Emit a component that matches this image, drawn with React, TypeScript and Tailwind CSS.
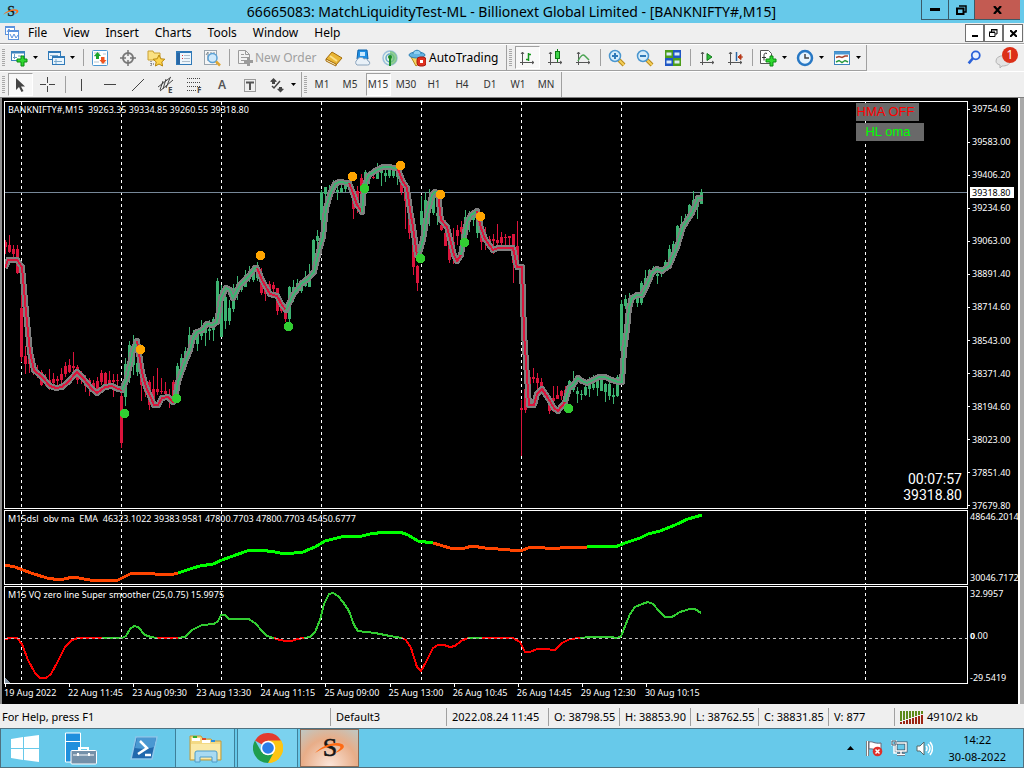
import React from "react";

type Candle = [x: number, high: number, low: number, top: number, bottom: number];
type Run = { color: string; points: string };

const RED = "#dc143c";
const GREEN = "#3cb371";

const redCandles: Candle[] = [
  [5, 240, 254, 242, 247], [9, 235, 253, 245, 252], [13, 245, 258, 249, 254], [17, 245, 274, 249, 273],
  [21, 262, 362, 308, 357], [25, 346, 374, 356, 364], [29, 350, 373, 358, 364], [33, 356, 375, 362, 372],
  [37, 365, 378, 370, 374], [41, 370, 386, 372, 385], [45, 374, 386, 377, 383], [49, 369, 390, 380, 386],
  [53, 373, 388, 379, 383], [57, 376, 387, 379, 381], [61, 368, 384, 374, 380], [65, 362, 377, 366, 374],
  [69, 359, 373, 365, 372], [73, 352, 371, 366, 368], [77, 365, 384, 367, 380], [81, 371, 384, 373, 380],
  [85, 375, 392, 378, 386], [89, 378, 396, 380, 389], [93, 380, 392, 383, 388], [97, 377, 387, 381, 391],
  [101, 370, 385, 373, 382], [105, 372, 384, 373, 385], [109, 371, 387, 380, 386], [113, 374, 397, 380, 382],
  [117, 374, 388, 380, 381], [121, 385, 448, 396, 443], [141, 370, 401, 375, 385], [145, 377, 397, 381, 392],
  [149, 380, 410, 382, 405], [153, 376, 406, 389, 404], [157, 368, 395, 389, 392], [161, 378, 394, 391, 392],
  [165, 382, 400, 391, 394], [169, 389, 408, 395, 398], [173, 380, 400, 382, 397], [261, 268, 295, 275, 293],
  [265, 280, 301, 290, 294], [269, 281, 290, 284, 289], [273, 282, 292, 285, 289], [277, 288, 315, 288, 311],
  [281, 302, 313, 305, 311], [285, 308, 322, 311, 319], [349, 182, 190, 184, 188], [353, 190, 219, 195, 209],
  [357, 186, 213, 191, 205], [361, 174, 212, 178, 200], [373, 176, 179, 177, 178], [401, 178, 195, 182, 192],
  [405, 183, 229, 190, 201], [409, 190, 239, 210, 233], [413, 225, 275, 230, 267], [417, 265, 291, 266, 283],
  [441, 215, 231, 225, 230], [445, 220, 246, 233, 246], [449, 229, 263, 243, 260], [453, 228, 264, 242, 258],
  [457, 225, 245, 230, 236], [461, 221, 240, 227, 232], [481, 227, 250, 232, 242], [485, 227, 250, 235, 242],
  [489, 236, 250, 239, 241], [493, 234, 254, 239, 241], [497, 224, 245, 240, 243], [501, 232, 250, 237, 243],
  [505, 234, 248, 237, 238], [509, 236, 250, 236, 238], [513, 234, 283, 234, 263], [517, 221, 270, 246, 266],
  [521, 400, 456, 408, 410], [525, 385, 413, 389, 410], [529, 375, 406, 377, 405], [533, 368, 383, 377, 379],
  [537, 373, 400, 378, 383], [541, 378, 392, 382, 387], [545, 390, 400, 392, 398], [549, 395, 414, 398, 411],
  [553, 386, 412, 398, 401], [557, 386, 399, 395, 399], [561, 390, 400, 391, 396], [565, 386, 400, 390, 395],
];

const greenCandles: Candle[] = [
  [125, 358, 406, 364, 397], [129, 341, 383, 345, 378], [133, 335, 375, 345, 365], [137, 345, 376, 363, 372],
  [177, 363, 395, 366, 393], [181, 354, 375, 358, 370], [185, 347, 365, 351, 360], [189, 327, 355, 335, 350],
  [193, 330, 345, 333, 341], [197, 330, 351, 332, 344], [201, 320, 340, 328, 336], [205, 325, 346, 328, 333],
  [209, 320, 340, 329, 331], [213, 317, 341, 319, 330], [217, 278, 322, 281, 322], [221, 285, 337, 290, 337],
  [225, 290, 329, 297, 321], [229, 300, 325, 308, 321], [233, 284, 312, 288, 309], [237, 276, 300, 284, 294],
  [241, 280, 292, 282, 290], [245, 270, 287, 275, 287], [249, 266, 282, 272, 279], [253, 266, 282, 270, 280],
  [257, 262, 281, 267, 278], [289, 286, 323, 287, 319], [293, 280, 302, 287, 297], [297, 279, 293, 283, 290],
  [301, 280, 293, 284, 291], [305, 271, 287, 277, 286], [309, 264, 287, 274, 287], [313, 239, 272, 240, 268],
  [317, 230, 256, 236, 241], [321, 190, 236, 192, 220], [325, 187, 200, 187, 194], [329, 185, 205, 190, 198],
  [333, 180, 190, 184, 189], [337, 185, 200, 190, 192], [341, 183, 193, 188, 192], [345, 184, 192, 186, 189],
  [365, 170, 192, 172, 188], [369, 172, 184, 174, 179], [377, 163, 178, 168, 179], [381, 168, 186, 168, 173],
  [385, 170, 182, 173, 176], [389, 168, 178, 170, 176], [393, 168, 178, 171, 176], [397, 169, 185, 171, 177],
  [421, 196, 240, 211, 225], [425, 192, 225, 200, 220], [429, 189, 226, 198, 212], [433, 191, 215, 196, 213],
  [437, 192, 225, 213, 216], [465, 210, 240, 217, 235], [469, 211, 232, 213, 220], [473, 210, 226, 214, 220],
  [477, 210, 238, 215, 233], [569, 380, 395, 381, 391], [573, 371, 392, 381, 390], [577, 387, 403, 391, 394],
  [581, 390, 400, 394, 395], [585, 385, 396, 387, 395], [589, 377, 397, 381, 389], [593, 375, 390, 384, 388],
  [597, 377, 396, 379, 388], [601, 377, 391, 380, 391], [605, 383, 402, 384, 392], [609, 380, 400, 384, 396],
  [613, 388, 404, 395, 397], [617, 375, 397, 377, 396], [621, 300, 352, 304, 351], [625, 295, 309, 299, 306],
  [629, 293, 306, 298, 303], [633, 294, 303, 296, 300], [637, 293, 307, 296, 303], [641, 281, 305, 283, 303],
  [645, 270, 290, 278, 285], [649, 269, 285, 270, 283], [653, 266, 276, 268, 273], [657, 267, 284, 274, 276],
  [661, 267, 277, 268, 274], [665, 260, 270, 262, 268], [669, 245, 268, 249, 265], [673, 241, 258, 244, 254],
  [677, 225, 247, 226, 245], [681, 216, 235, 224, 226], [685, 214, 226, 218, 222], [689, 204, 222, 205, 218],
  [693, 191, 215, 200, 208], [697, 196, 219, 199, 207], [701, 189, 204, 192, 204],
];

const trend: Run[] = [
  { color: RED, points: "5,268 8,260 17,260 22,267 26,312 30,352 34,370 42,377 50,386 56,388 62,387 68,382 77,372 83,378 92,389 97,393 105,387 112,386 118,389 122,390" },
  { color: GREEN, points: "122,390 127,378 133,350 137,341" },
  { color: RED, points: "137,341 142,372 146,387 151,398 154,405 158,405 162,398 168,397 173,402 175,399" },
  { color: GREEN, points: "175,399 178,382 185,362 190,350 193,338 197,332 202,330 207,324 213,325 217,322 221,298 226,288 230,290 233,298 240,285 248,277 255,268 257,268" },
  { color: RED, points: "257,268 262,280 270,294 277,296 282,305 286,310" },
  { color: GREEN, points: "286,310 293,295 302,283 308,279 314,272 320,247 323,237 326,208 331,192 335,184 339,182 349,183" },
  { color: RED, points: "349,183 353,193 357,205 362,212" },
  { color: GREEN, points: "362,212 364,188 368,176 375,171 383,167 390,167 398,169" },
  { color: RED, points: "398,169 402,180 407,188 410,210 413,227 417,255" },
  { color: GREEN, points: "417,255 419,253 423,240 427,215 432,195 435,192 438,193" },
  { color: RED, points: "438,193 441,220 447,227 451,243 454,255 457,261 461,255" },
  { color: GREEN, points: "461,255 464,237 467,222 471,215 477,211" },
  { color: RED, points: "477,211 481,228 485,239 493,250 498,248 513,248 517,267 522,267 524,333 527,377 529,405 534,405 537,394 542,389 548,398 554,408 558,411 565,402" },
  { color: GREEN, points: "565,402 569,388 573,385 578,378 582,381 587,383 593,380 599,377 605,377 612,380 618,382 622,382 624,350 627,330 629,308 632,298 637,295 642,295 647,285 652,273 657,269 662,271 669,266 677,247 683,227 692,213 698,198 703,198" },
];

const volume: Run[] = [
  { color: "#ff4500", points: "5,565 15,567 23,570 31,573 47,578 60,580 73,577 90,580 118,580 124,577 132,573 146,573 155,574 170,575 178,573" },
  { color: "#00ff00", points: "178,573 190,569 200,566 213,564 222,560 233,556 247,551 260,550 275,552 285,554 303,552 315,547 325,541 333,539 345,536 358,537 370,534 385,532 400,532 408,535 418,541 433,543" },
  { color: "#ff4500", points: "433,543 450,548 462,549 472,546 485,548 510,550 523,550 528,548 538,547 552,549 568,547 587,547" },
  { color: "#00ff00", points: "587,547 610,546 615,547 625,543 640,538 648,534 660,531 675,525 688,519 702,515" },
];

const quality: Run[] = [
  { color: "#ff0000", points: "5,639 10,638 17,638 22,644 28,660 35,673 40,678 46,678 51,674 58,661 65,647 72,640 78,638 102,638" },
  { color: "#32cd32", points: "102,638 122,638 126,636 130,629 134,626 138,627 145,635 151,637 157,638" },
  { color: "#ff0000", points: "157,638 178,638" },
  { color: "#32cd32", points: "178,638 185,637 192,630 202,625 214,624 218,621 221,615 225,615 229,619 249,619 256,624 262,631 267,636 274,638" },
  { color: "#ff0000", points: "274,638 280,640 286,641 292,641 297,639 304,638" },
  { color: "#32cd32", points: "304,638 310,637 315,632 320,620 324,604 329,594 333,593 338,596 343,602 349,611 354,625 358,631 375,633 390,636 402,638" },
  { color: "#ff0000", points: "402,638 406,640 411,648 417,667 421,671 426,662 433,648 438,645 444,645 450,647 455,646 461,641 468,638" },
  { color: "#32cd32", points: "468,638 482,638" },
  { color: "#ff0000", points: "482,638 513,638 520,642 525,652 530,652 537,649 545,649 555,650 562,643 570,639 580,638" },
  { color: "#32cd32", points: "580,638 590,637 610,637 618,638 621,636 626,624 630,614 635,607 642,604 648,602 653,604 659,611 665,617 672,617 680,612 690,609 695,609 701,613" },
];

const sells = [[140, 349], [260, 255], [352, 176], [400, 165], [440, 194], [480, 216]];
const buys = [[124, 413], [176, 398], [288, 326], [364, 188], [420, 258], [464, 242], [568, 408]];
const days = [21, 121, 221, 321, 421, 521, 621, 865];

const prices = ["39754.60", "39583.00", "39406.20", "39234.60", "39063.00", "38891.40", "38714.60", "38543.00", "38371.40", "38194.60", "38023.00", "37851.40", "37679.80"];
const times = ["19 Aug 2022", "22 Aug 11:45", "23 Aug 09:30", "23 Aug 13:30", "24 Aug 11:15", "25 Aug 09:00", "25 Aug 13:00", "26 Aug 10:45", "26 Aug 14:45", "29 Aug 12:30", "30 Aug 10:15"];

function Lines({ runs, width }: { runs: Run[]; width: number }) {
  return (
    <>
      {runs.map((r) => (
        <polyline key={r.points} points={r.points} fill="none" stroke={r.color} strokeWidth={width} strokeLinejoin="round" />
      ))}
    </>
  );
}

function DayLines({ from, to }: { from: number; to: number }) {
  return (
    <>
      {days.map((x) => (
        <line key={x} x1={x + 0.5} x2={x + 0.5} y1={from} y2={to} stroke="#fff" strokeDasharray="3 3" />
      ))}
    </>
  );
}

function Candles({ data, color }: { data: Candle[]; color: string }) {
  return (
    <g fill={color}>
      {data.map(([x, high, low, top, bottom]) => (
        <React.Fragment key={x}>
          <rect x={x} y={high} width={1} height={low - high} />
          <rect x={x - 1} y={top} width={3} height={bottom - top} />
        </React.Fragment>
      ))}
    </g>
  );
}

function Plot({ box, children }: { box: string; children: React.ReactNode }) {
  return (
    <svg className="absolute inset-0 h-full w-full" viewBox={box} preserveAspectRatio="none" shapeRendering="crispEdges" aria-hidden="true">
      {children}
    </svg>
  );
}

function PriceChart() {
  return (
    <Plot box="5 102 962 406">
      <DayLines from={102} to={508} />
      <rect x="5" y="192" width="962" height="1" fill="#778899" />
      <Candles data={redCandles} color={RED} />
      <Candles data={greenCandles} color={GREEN} />
      <polyline points={trend.map((r) => r.points).join(" ")} fill="none" stroke="#808080" strokeWidth="6" strokeLinejoin="round" />
      <Lines runs={trend} width={2} />
      {sells.map(([x, y]) => <circle key={x} cx={x + 0.5} cy={y + 0.5} r="4.6" fill="#ffa500" />)}
      {buys.map(([x, y]) => <circle key={x} cx={x + 0.5} cy={y + 0.5} r="4.6" fill="#32cd32" />)}
    </Plot>
  );
}

/* ---------- icons ---------- */

function Icon({ size = 18, children }: { size?: number; children: React.ReactNode }) {
  return <svg width={size} height={size} viewBox="0 0 18 18" fill="none" className="shrink-0" aria-hidden="true">{children}</svg>;
}

function Caret() {
  return <svg width="5" height="3" viewBox="0 0 5 3" className="shrink-0" aria-hidden="true"><path d="M0 0h5L2.500 3z" fill="#000" /></svg>;
}

const plus = <path d="M11 7h3v3h3v3h-3v4h-3v-4H7v-3h4z" fill="#2fd82f" stroke="#0b8a12" />;
const axes = <path d="M4.500 3v13M2 13.500h14M3 5l1.500-2L6 5M14 12l2 1.500-2 1.500" stroke="#555" />;

const NewChart = () => (<Icon><rect x="1.500" y="2.500" width="13" height="9" fill="#fff" stroke="#3c83bd" /><path d="M1 3.500h14" stroke="#3c83bd" strokeWidth="2" /><path d="M4.500 5v5M3 8.500h4M8 7h4" stroke="#6a9cc4" />{plus}</Icon>);
const Profiles = () => (<Icon><rect x="1.500" y="2.500" width="12" height="8" fill="#eaf5fd" stroke="#2f79b8" /><path d="M1 3h13" stroke="#2f79b8" strokeWidth="2" /><rect x="5.500" y="7.500" width="12" height="8" fill="#eaf5fd" stroke="#2f79b8" /><path d="M5 8h13" stroke="#2f79b8" strokeWidth="2" /><path d="M3 6.500h8M7 12.500h8M9 10v5" stroke="#7aa9cd" /></Icon>);
const Market = () => (<Icon><rect x="1.500" y="1.500" width="15" height="15" rx="1" fill="#fff" stroke="#4a97d2" /><path d="M3 4h6M3 7h3M10 14h5M3 13h5M12 5h3" stroke="#b7c5d0" /><path d="M6.500 3l3.500 4H8v3H5V7H3z" fill="#19a52a" /><path d="M12 15l-3.500-4H10V8h3.500v3h2z" fill="#f0541e" /></Icon>);
const Target = () => (<Icon><circle cx="9" cy="9" r="5" stroke="#777" strokeWidth="2" /><path d="M9 1v6M9 11v6M1 9h6M11 9h6" stroke="#777" strokeWidth="1.500" /></Icon>);
const Navigator = () => (<Icon><path d="M1 2h5l1 2h6v7H1z" fill="#fbe182" stroke="#c9a032" /><path d="M4 12v5M4 15h4" stroke="#555" strokeDasharray="1 1" /><path d="M12 6l1.800 3.800 4 .4-3 2.700.8 4.100-3.600-2-3.600 2 .8-4.100-3-2.700 4-.4z" fill="#fdd44d" stroke="#b8860b" /></Icon>);
const Terminal = () => (<Icon><rect x="1.500" y="2.500" width="15" height="13" fill="#eef6fc" stroke="#2f79b8" /><path d="M2 3h14" stroke="#2f79b8" strokeWidth="2" /><rect x="2" y="4" width="3" height="11" fill="#2967a5" /><path d="M7 6.500h1M7 9.500h1" stroke="#d33" /><path d="M9 6.500h6M9 9.500h6M7 12.500h8" stroke="#aebdca" /></Icon>);
const Tester = () => (<Icon><rect x="1.500" y="1.500" width="12" height="14" fill="#f6f6f6" stroke="#9aa5ae" /><path d="M3 6l2-3v9M8 3v5M11 3v4" stroke="#7b8790" /><circle cx="9.500" cy="9" r="4.500" fill="#cfe9fb" stroke="#5ba1d6" strokeWidth="1.500" /><path d="M13 12.500l4 4" stroke="#e0a632" strokeWidth="2.500" /></Icon>);
const Order = () => (<Icon><path d="M2.500 1.500h7l4 4v9h-11z" fill="#f3f3f3" stroke="#9b9b9b" /><path d="M9.500 1.500v4h4M5 5.500h3M5 8.500h6M5 11.500h4" stroke="#9b9b9b" /><path d="M11 8h3v3h3v3h-3v3h-3v-3H8v-3h3z" fill="#9b9b9b" /></Icon>);
const Book = () => (<Icon><path d="M1 10L7 3l10 6-6 7z" fill="#e9b635" stroke="#a46c0b" /><path d="M1 10v2l10 5v-2z" fill="#fff3c8" stroke="#a46c0b" /><path d="M5 7l7 5" stroke="#fbe08a" strokeWidth="2" /></Icon>);
const Cloud = () => (<Icon><path d="M5 1h9l1 9H4z" fill="#1f8fe3" stroke="#0d62ab" /><path d="M7 3h5v4H7z" fill="#c9e9ff" /><path d="M4 16a3 3 0 010-5 4 4 0 017-1 3 3 0 014 2 2 2 0 01-.5 4z" fill="#e9f1f8" stroke="#8aa4bd" /></Icon>);
const Signal = () => (<Icon><circle cx="9" cy="9" r="7" fill="#e6f2e8" stroke="#9cc0dd" strokeWidth="1.500" /><circle cx="9" cy="9" r="4" stroke="#69a7cc" strokeWidth="1.500" /><path d="M9 2a7 7 0 010 14z" fill="#6dc06e" opacity=".7" /><circle cx="9" cy="8" r="2" fill="#178a25" /><path d="M9 9v8" stroke="#178a25" strokeWidth="2" /></Icon>);
const Auto = () => (<Icon><path d="M3 8l5 9 6-5V7z" fill="#f7d661" stroke="#b28a1a" /><ellipse cx="9" cy="6" rx="8" ry="3" fill="#63b4e2" stroke="#2f81b5" /><path d="M5 5c0-5 8-5 8 0" fill="#8fd0f2" stroke="#2f81b5" /><rect x="9" y="8" width="9" height="9" rx="3" fill="#e0301e" stroke="#a61b10" /><rect x="12" y="11" width="3" height="3" fill="#fff" /></Icon>);
const Bars = () => (<Icon>{axes}<path d="M10.500 4v8M8 10.500h3M11 5.500h2" stroke="#16961e" strokeWidth="1.500" /></Icon>);
const CandleIcon = () => (<Icon>{axes}<path d="M11.500 0v13" stroke="#0a7a12" /><rect x="9.500" y="2.500" width="4" height="7" fill="#3fd44a" stroke="#0a7a12" /></Icon>);
const LineIcon = () => (<Icon>{axes}<path d="M4 12c3-6 5-7 7-5l4 4" stroke="#4aa352" strokeWidth="1.500" /></Icon>);
const Zoomer = ({ inward }: { inward?: boolean }) => (<Icon><path d="M11 11l5 5" stroke="#b88a1c" strokeWidth="4" /><path d="M11 11l5 5" stroke="#f5cf58" strokeWidth="2" /><circle cx="7" cy="7" r="5.500" fill="#d6edfb" stroke="#4a96cf" strokeWidth="1.500" /><path d={inward ? "M4 7h6M7 4v6" : "M4 7h6"} stroke="#2f79b8" strokeWidth="2" /></Icon>);
const Tile = () => (<Icon><rect x="1" y="1" width="8" height="8" fill="#4d9e1b" /><rect x="9" y="1" width="8" height="8" fill="#1f56c4" /><rect x="1" y="9" width="8" height="8" fill="#1f56c4" /><rect x="9" y="9" width="8" height="8" fill="#4d9e1b" /><path d="M2.500 5h5M10.500 5h5M2.500 13h5M10.500 13h5" stroke="#dcecf8" strokeWidth="3" /></Icon>);
const Scroll = () => (<Icon>{axes}<path d="M9 4.500l5 3.500-5 3.500z" fill="#2fbf3a" stroke="#117a19" /></Icon>);
const Shift = () => (<Icon>{axes}<path d="M10.500 3v9" stroke="#2967a5" strokeWidth="1.500" /><path d="M12 8l3-2.500v5zM14 8h3" fill="#d3401a" stroke="#b03010" /></Icon>);
const Indicators = () => (<Icon><path d="M1.500 1.500h8l3 3v10h-11z" fill="#fff" stroke="#555" /><path d="M8 4.500c-2-1-3 0-3 2v5M3 8.500h4" stroke="#333" />{plus}</Icon>);
const Clock = () => (<Icon><circle cx="9" cy="9" r="7" fill="#e8f4fd" stroke="#2878c4" strokeWidth="2.500" /><path d="M9 5v4h4" stroke="#444" strokeWidth="1.500" /></Icon>);
const Template = () => (<Icon><rect x="1.500" y="2.500" width="15" height="13" fill="#fff" stroke="#3c83bd" /><path d="M1 4h16" stroke="#4a97d2" strokeWidth="3" /><path d="M3 8.500l3-1 3 1 3-1.500h3" stroke="#a8432d" strokeWidth="1.500" /><path d="M3 13l3-1.500 3 2 3-2 3 1.500" stroke="#2c9a41" strokeWidth="1.500" /></Icon>);

const Cursor = () => (<Icon><path d="M5 2v12l3-3 2.500 5 2-1L10 10.500h4z" fill="#444" /></Icon>);
const Cross = () => (<Icon><path d="M8.500 1v6M8.500 10v6M1 8.500h6M10 8.500h6" stroke="#444" /></Icon>);
const VLine = () => (<Icon><path d="M8.500 3v12" stroke="#444" /></Icon>);
const HLine = () => (<Icon><path d="M3 8.500h12" stroke="#444" /></Icon>);
const Slope = () => (<Icon><path d="M3 15L15 3" stroke="#444" /></Icon>);
const Channel = () => (<Icon><path d="M1 11L14 1M3 15L16 4M3 14l3-9M6 13l3-10M9 12l4-10" stroke="#444" /><text x="11" y="17" fontSize="8" fontFamily="Noto Sans" fontWeight="700" fill="#444">E</text></Icon>);
const Fibo = () => (<Icon><path d="M2 2.500h14M2 6.500h14M2 10.500h14M2 14.500h9" stroke="#444" strokeDasharray="1 1" /><text x="12" y="17" fontSize="8" fontFamily="Noto Sans" fontWeight="700" fill="#444">F</text></Icon>);
const LabelT = () => (<Icon><rect x="3.500" y="3.500" width="11" height="12" stroke="#444" strokeDasharray="1 1" /><path d="M5 6.500h8M9 6v8" stroke="#555" strokeWidth="2" /></Icon>);
const Arrows = () => (<Icon><path d="M2 5.500L5.500 2 9 5.500 7 6v2H4V6z" fill="#444" /><path d="M9 13l2-.5V11h3v1.500l2 .5-3.500 3.500z" fill="#444" /><path d="M4 10l2 2 6-7" stroke="#444" strokeWidth="1.500" /></Icon>);

function Logo({ size }: { size: number }) {
  return (
    <svg width={size} height={size} viewBox="0 0 30 24" aria-hidden="true">
      <text x="15" y="20" textAnchor="middle" fontFamily="Liberation Serif" fontSize="26" fill="#151515" stroke="#151515" strokeWidth="0.6">S</text>
      <path d="M0 17C8 9 20 5 27 8c5 3-1 7-7 9 5-4 7-6 4-7C18 8 8 12 0 17z" fill="#ff6a13" />
    </svg>
  );
}

/* ---------- toolbars ---------- */

function Tool({ label, pressed, children }: { label: string; pressed?: boolean; children: React.ReactNode }) {
  return (
    <button type="button" aria-label={label} className="flex h-[25px] w-7 shrink-0 items-center justify-center">
      <span className={pressed ? "flex h-[23px] w-[25px] items-center justify-center border border-white border-t-[#a0a0a0] border-l-[#a0a0a0] bg-[#f8f8f8]" : "flex items-center justify-center"}>{children}</span>
    </button>
  );
}

function MenuTool({ label, children }: { label: string; children: React.ReactNode }) {
  return <button type="button" aria-label={label} className="flex h-[25px] w-[37px] shrink-0 items-center gap-[5px] pl-1">{children}<Caret /></button>;
}

const Sep = () => <div className="flex w-[6px] shrink-0 justify-center py-1"><div className="w-px bg-[#a0a0a0]" /></div>;
const Grip = () => <div className="my-[4px] mr-px ml-[2px] w-[3px] shrink-0 bg-[repeating-linear-gradient(#a8a8a8_0_1px,#efefef_1px_2px)]" />;

const frames = ["M1", "M5", "M15", "M30", "H1", "H4", "D1", "W1", "MN"];

function Toolbars() {
  return (
    <div className="bg-[#efefef]">
      <div className="flex h-[27px] border-t border-white">
        <div className="flex border-r border-b border-[#a0a0a0]">
          <Grip />
          <MenuTool label="New chart"><NewChart /></MenuTool>
          <MenuTool label="Profiles"><Profiles /></MenuTool>
          <Sep />
          <Tool label="Market Watch"><Market /></Tool>
          <Tool label="Data Window"><Target /></Tool>
          <Tool label="Navigator"><Navigator /></Tool>
          <Tool label="Terminal"><Terminal /></Tool>
          <Tool label="Strategy Tester"><Tester /></Tool>
          <Sep />
          <button type="button" className="flex h-[25px] w-[88px] items-center gap-px pl-1 text-[12px] whitespace-nowrap text-[#a0a0a0]"><Order />New Order</button>
          <Tool label="MetaEditor"><Book /></Tool>
          <Tool label="Cloud"><Cloud /></Tool>
          <Tool label="Signals"><Signal /></Tool>
          <button type="button" className="flex h-[25px] w-[102px] items-center gap-[3px] pl-1 text-[12px] whitespace-nowrap"><Auto />AutoTrading</button>
        </div>
        <div className="flex border-r border-b border-[#a0a0a0]">
          <Grip />
          <Tool label="Bar chart" pressed><Bars /></Tool>
          <Tool label="Candlesticks"><CandleIcon /></Tool>
          <Tool label="Line chart"><LineIcon /></Tool>
          <Sep />
          <Tool label="Zoom in"><Zoomer inward /></Tool>
          <Tool label="Zoom out"><Zoomer /></Tool>
          <Tool label="Tile windows"><Tile /></Tool>
          <Sep />
          <Tool label="Auto scroll"><Scroll /></Tool>
          <Tool label="Chart shift"><Shift /></Tool>
          <Sep />
          <MenuTool label="Indicators"><Indicators /></MenuTool>
          <MenuTool label="Periods"><Clock /></MenuTool>
          <MenuTool label="Templates"><Template /></MenuTool>
        </div>
        <div className="ml-auto flex items-center gap-3 pr-[6px]">
          <button type="button" aria-label="Search"><Icon size={16}><circle cx="11" cy="6" r="4.500" fill="#eaf3ff" stroke="#2b62d9" strokeWidth="2" /><path d="M8 9l-5 6" stroke="#2b62d9" strokeWidth="3" /></Icon></button>
          <button type="button" aria-label="1 notification" className="relative h-[22px] w-6">
            <svg width="24" height="22" viewBox="0 0 24 22" aria-hidden="true"><path d="M2 14c0-7 14-7 14 0 0 4-4 5-8 5l-2 2v-3c-3-1-4-2-4-4z" fill="#e3e3e3" stroke="#b5b5b5" /></svg>
            <span className="absolute top-0 right-0 flex h-4 w-4 items-center justify-center rounded-full bg-[#dc3018] text-[12px] leading-4 text-white">1</span>
          </button>
        </div>
      </div>
      <div className="flex h-[26px] border-t border-white">
        <div className="flex border-r border-[#a0a0a0]">
          <Grip />
          <Tool label="Cursor" pressed><Cursor /></Tool>
          <Tool label="Crosshair"><Cross /></Tool>
          <Sep />
          <Tool label="Vertical line"><VLine /></Tool>
          <Tool label="Horizontal line"><HLine /></Tool>
          <Tool label="Trendline"><Slope /></Tool>
          <Tool label="Equidistant channel"><Channel /></Tool>
          <Tool label="Fibonacci retracement"><Fibo /></Tool>
          <Tool label="Text"><span className="text-[12px] font-semibold text-[#555]">A</span></Tool>
          <Tool label="Text label"><LabelT /></Tool>
          <MenuTool label="Arrows"><Arrows /></MenuTool>
        </div>
        <div className="flex border-r border-[#a0a0a0] pr-px">
          <Grip />
          {frames.map((f) => (
            <Tool key={f} label={f} pressed={f === "M15"}><span className="text-[10px] text-[#333]">{f}</span></Tool>
          ))}
        </div>
      </div>
    </div>
  );
}

const stats = [
  { text: "Default3", width: "w-[116px]" },
  { text: "2022.08.24 11:45", width: "w-[102px]" },
  { text: "O: 38798.55", width: "w-[71px]" },
  { text: "H: 38853.90", width: "w-[71px]" },
  { text: "L: 38762.55", width: "w-[68px]" },
  { text: "C: 38831.85", width: "w-[70px]" },
  { text: "V: 877", width: "w-[66px]" },
];

function Tick() {
  return <span className="h-px w-[2px] shrink-0 bg-white" />;
}

export default function App() {
  return (
    <div className="flex min-h-screen flex-col bg-[#efefef] font-['Noto_Sans',sans-serif] text-[12px] text-black">
      <header className="flex h-[23px] items-center bg-[#67c9ea] pl-[3px]">
        <Logo size={16} />
        <h1 className="flex-1 pl-[83px] text-center text-[14px] leading-[23px] whitespace-nowrap">66665083: MatchLiquidityTest-ML - Billionext Global Limited - [BANKNIFTY#,M15]</h1>
        <div className="mr-1 flex h-5 self-start border-b border-l border-[#3a5a68]">
          <button type="button" aria-label="Minimize" className="flex w-[27px] items-center justify-center border-r border-[#3a5a68]"><svg width="10" height="3" aria-hidden="true"><rect width="10" height="3" /></svg></button>
          <button type="button" aria-label="Restore" className="flex w-[26px] items-center justify-center border-r border-[#3a5a68]"><svg width="11" height="10" viewBox="0 0 11 10" fill="none" stroke="#000" aria-hidden="true"><path d="M3 1h7v6H8" strokeWidth="1.500" /><path d="M1 3.500h6.500v5.500H1z" strokeWidth="2" /></svg></button>
          <button type="button" aria-label="Close" className="flex w-[45px] items-center justify-center bg-[#c35b52]"><svg width="9" height="8" viewBox="0 0 9 8" aria-hidden="true"><path d="M1 0l7 8M8 0L1 8" stroke="#000" strokeWidth="2.200" /></svg></button>
        </div>
      </header>

      <nav className="flex h-[21px] items-center border-b border-[#a0a0a0] pl-1">
        <svg width="16" height="16" viewBox="0 0 16 16" fill="none" stroke="#5b92dd" aria-hidden="true"><rect x="1.500" y="1.500" width="9" height="8" fill="#fff" /><path d="M1 2.500h10M3 7l2-3 1 3" /><rect x="4.500" y="5.500" width="10" height="9" fill="#fff" /><path d="M4 6.500h11M6 9l2 4 2-4 2 4 2-3" /></svg>
        <div className="flex items-center gap-4 pl-2 leading-5">
          {["File", "View", "Insert", "Charts", "Tools", "Window", "Help"].map((m) => (
            <button key={m} type="button">{m}</button>
          ))}
        </div>
        <div className="ml-auto flex h-[18px] pr-px">
          <button type="button" aria-label="Minimize chart" className="flex w-[19px] items-end justify-center border border-[#707070] bg-white pb-1"><svg width="6" height="2" aria-hidden="true"><rect width="6" height="2" /></svg></button>
          <button type="button" aria-label="Restore chart" className="flex w-[19px] items-center justify-center border border-[#707070] bg-white"><svg width="9" height="8" viewBox="0 0 9 8" fill="none" stroke="#000" aria-hidden="true"><path d="M2.500 3V1H8v4H6.500M2 .5h6.500" /><path d="M.5 3.500h5.500v4H.5zM0 3h6" /></svg></button>
          <button type="button" aria-label="Close chart" className="flex w-[20px] items-center justify-center border border-[#707070] bg-white"><svg width="7" height="7" viewBox="0 0 7 7" aria-hidden="true"><path d="M0 0l7 7M7 0L0 7" stroke="#000" strokeWidth="2" /></svg></button>
        </div>
      </nav>

      <Toolbars />

      <main className="flex flex-1 border-t border-[#808080] pb-[2px] text-[9px] leading-3 text-white">
        <div className="w-[2px] bg-[#8f8f8f]" />
        <div className="flex min-w-0 flex-1 flex-col gap-px bg-black pt-[3px] pl-[2px]">
          <section className="flex min-h-[240px] flex-1">
            <div className="relative min-w-0 flex-1 border border-white">
              <PriceChart />
              <p className="absolute top-[2px] left-[3px] whitespace-pre">BANKNIFTY#,M15  39263.35 39334.85 39260.55 39318.80</p>
              <div className="absolute top-px right-[43px] flex w-[68px] flex-col items-start gap-[2px] font-['Liberation_Sans',sans-serif] text-[13px] leading-[18px]">
                <button type="button" className="w-[63px] bg-[#696969] pr-1 whitespace-nowrap text-[#ff0000]">HMA OFF</button>
                <button type="button" className="w-full bg-[#696969] pr-1 text-[#00ff00]">HL oma</button>
              </div>
              <div className="absolute right-[5px] bottom-[5px] text-right font-[Roboto,sans-serif] text-[14px] leading-4">
                <p>00:07:57</p>
                <p>39318.80</p>
              </div>
            </div>
            <div className="relative -mb-[3px] flex w-[50px] flex-col justify-between pt-[2px]">
              {prices.map((p) => <div key={p} className="flex items-center gap-[2px]"><Tick />{p}</div>)}
              <span className="absolute top-[86px] left-[2px] w-11 bg-white pl-[2px] leading-[11px] text-black">39318.80</span>
            </div>
          </section>

          <section className="flex h-[75px]">
            <div className="relative min-w-0 flex-1 border border-white">
              <Plot box="5 511 962 73"><DayLines from={511} to={584} /><Lines runs={volume} width={3} /></Plot>
              <p className="absolute top-[2px] left-[3px] whitespace-pre">M15dsl  obv ma  EMA  46323.1022 39383.9581 47800.7703 47800.7703 45450.6777</p>
            </div>
            <div className="flex w-[50px] flex-col justify-between overflow-hidden py-px pl-[2px]"><span>48646.2014</span><span>30046.7172</span></div>
          </section>

          <section className="flex h-[98px]">
            <div className="relative min-w-0 flex-1 border border-white">
              <Plot box="5 587 962 96">
                <DayLines from={587} to={681} />
                <Lines runs={quality} width={2} />
                <path d="M5 638.500h962" stroke="#c0c0c0" strokeDasharray="3 3" />
                <path d="M5 678v5h5z" fill="#8494a4" />
              </Plot>
              <p className="absolute top-[2px] left-[3px]">M15 VQ zero line Super smoother (25,0.75) 15.9975</p>
            </div>
            <div className="flex w-[50px] flex-col justify-between pt-[2px] pl-[2px]"><span>32.9957</span><span><b>0</b>.00</span><span>-29.5419</span></div>
          </section>

          <div className="-mt-px flex h-5 pr-[50px]">
            {times.map((t) => (
              <div key={t} className="w-[6.65%] shrink-0 whitespace-nowrap"><div className="ml-px h-[3px] w-px bg-white" />{t}</div>
            ))}
          </div>
        </div>
        <div className="w-[2px] bg-white" />
        <div className="w-1 bg-[#a9a9a9]" />
      </main>

      <footer className="flex h-[22px] items-center text-[11px] leading-[22px] whitespace-nowrap">
        <span className="flex-1 pl-[2px]">For Help, press F1</span>
        {stats.map((s) => (
          <span key={s.text} className={`${s.width} h-[18px] border-l border-[#a0a0a0] pl-[5px] leading-[18px]`}>{s.text}</span>
        ))}
        <span className="flex h-[18px] w-[130px] items-center gap-1 border-l border-[#a0a0a0] pl-[5px] leading-[18px]">
          <svg width="23" height="13" viewBox="0 0 23 13" shapeRendering="crispEdges" aria-hidden="true">
            {[0, 1, 2, 3, 4, 5, 6, 7].map((i) => (
              <g key={i}><rect x={i * 3} y="0" width="2" height={10 - i} fill="#5c8a1a" /><rect x={i * 3} y={11 - i} width="2" height={2 + i} fill="#9c2413" /></g>
            ))}
          </svg>
          4910/2 kb
        </span>
      </footer>

      <div className="flex h-10 items-stretch border border-[#4f7180] bg-[#67c9ea]">
        <button type="button" aria-label="Start" className="flex w-[48px] items-center justify-center"><svg width="28" height="27" viewBox="0 0 28 27" fill="#fff" aria-hidden="true"><path d="M0 4l12-2v11H0zM13 2l15-2v13H13zM0 14h12v11L0 23zM13 14h15v13l-15-2z" /></svg></button>
        <button type="button" aria-label="Server Manager" className="flex w-[64px] items-center justify-center"><svg width="32" height="33" viewBox="0 0 32 33" stroke="#fff" aria-hidden="true"><path d="M.5 1h15v29H.5z" fill="#1f8fdd" /><path d="M1 9.500h14" /><path d="M14 19v-3h9v3" fill="none" strokeWidth="2" /><rect x="6" y="18.500" width="25.500" height="13.500" rx="1" fill="#7490a8" /><path d="M8 23h21" /><path d="M13 21v3M24 21v3" strokeWidth="2" /></svg></button>
        <button type="button" aria-label="PowerShell" className="flex w-[62px] items-center justify-center"><svg width="28" height="24" viewBox="0 0 28 24" aria-hidden="true"><path d="M6 1h21l-5 22H1z" fill="#2269ad" stroke="#8dc6ea" strokeWidth="1.500" /><path d="M7 2h19l-2 9c-6 2-13 2-19 1z" fill="#4a98d2" /><path d="M10 5l7 7-9 6M15 19h6" stroke="#fff" strokeWidth="2.500" fill="none" /></svg></button>
        <div className="flex gap-[2px]">
          <button type="button" aria-label="File Explorer" className="flex w-[60px] items-center justify-center border-x border-[#3f7f99] bg-[#7bd2ef]"><svg width="33" height="30" viewBox="0 0 33 30" aria-hidden="true"><path d="M1 3h11l2 3h8l2 2h8v19H1z" fill="#f3d984" stroke="#c09a3c" /><path d="M3 5h8v3H3zM13 7h8v3h-8z" fill="#fff" /><path d="M4 3h4v2H4z" fill="#2faf30" /><path d="M13 5h4v2h-4z" fill="#df4a28" /><path d="M22 7h4v2h-4z" fill="#2b8de0" /><rect x="2" y="11" width="29" height="15" fill="#fae9a8" /><path d="M6 29V20q0-2 2-2h18q2 0 2 2v9h-5v-5H11v5z" fill="#a8daf2" stroke="#4c9cc9" /></svg></button>
          <button type="button" aria-label="Chrome" className="flex w-[61px] items-center justify-center border-x border-[#3f7f99] bg-[#7bd2ef]"><svg width="30" height="30" viewBox="0 0 30 30" aria-hidden="true"><path d="M15 15L2 7.500A15 15 0 0128 7.500z" fill="#e33b2e" /><path d="M15 15l13-7.500A15 15 0 0115 30z" fill="#fdc513" /><path d="M28 7.500H15v7.500l6.500 4L15 30A15 15 0 0028 7.500z" fill="#fdc513" /><path d="M15 30A15 15 0 012 7.500L8.500 19 15 22l5-1z" fill="#1f9d4d" /><circle cx="15" cy="15" r="7.300" fill="#fff" /><circle cx="15" cy="15" r="5.800" fill="#2b7de9" /></svg></button>
          <button type="button" aria-label="Trading terminal" className="flex w-[59px] items-center justify-center border border-[#8a6a56] bg-[radial-gradient(circle_at_50%_100%,#fbe6da,#e8ad88_60%,#bdc9c6)]"><Logo size={30} /></button>
        </div>
        <div className="ml-auto flex items-center gap-2 pr-[17px]">
          <svg width="7" height="4" viewBox="0 0 7 4" className="mr-1" aria-hidden="true"><path d="M3.500 0L7 4H0z" /></svg>
          <svg width="17" height="17" viewBox="0 0 17 17" aria-hidden="true"><path d="M1.500 1v15" stroke="#555" strokeWidth="3" /><path d="M1.500 1v15" stroke="#fff" strokeWidth="1.500" /><path d="M3 2c4-1 5 2 12 1v7c-6 1-8-2-12-1z" fill="#fff" stroke="#667" /><circle cx="11.500" cy="11.500" r="4.800" fill="#df2f2a" /><path d="M9.500 9.500l4 4M13.500 9.500l-4 4" stroke="#fff" strokeWidth="1.500" /></svg>
          <svg width="17" height="16" viewBox="0 0 17 16" fill="none" aria-hidden="true"><path d="M5 3h10v8H5zM10 11v3M6 14.500h8" stroke="#456" strokeWidth="3" /><path d="M5 3h10v8H5zM10 11v3M6 14.500h8" stroke="#fff" strokeWidth="1.500" /><path d="M1 1h4v4H1zM3 5v8h3" stroke="#fff" strokeWidth="1.500" /><path d="M1 1h4v4H1z" stroke="#456" /></svg>
          <svg width="17" height="15" viewBox="0 0 17 15" fill="none" aria-hidden="true"><path d="M1 5h3l4-4v13l-4-4H1z" fill="#fff" stroke="#566" /><path d="M10 5q2 2.500 0 5M12 3q4 4.500 0 9M14 1q5 6.500 0 13" stroke="#fff" strokeWidth="1.500" /></svg>
          <time className="ml-2 text-center text-[11px] leading-[17px]">14:22<br />30-08-2022</time>
        </div>
      </div>
    </div>
  );
}
